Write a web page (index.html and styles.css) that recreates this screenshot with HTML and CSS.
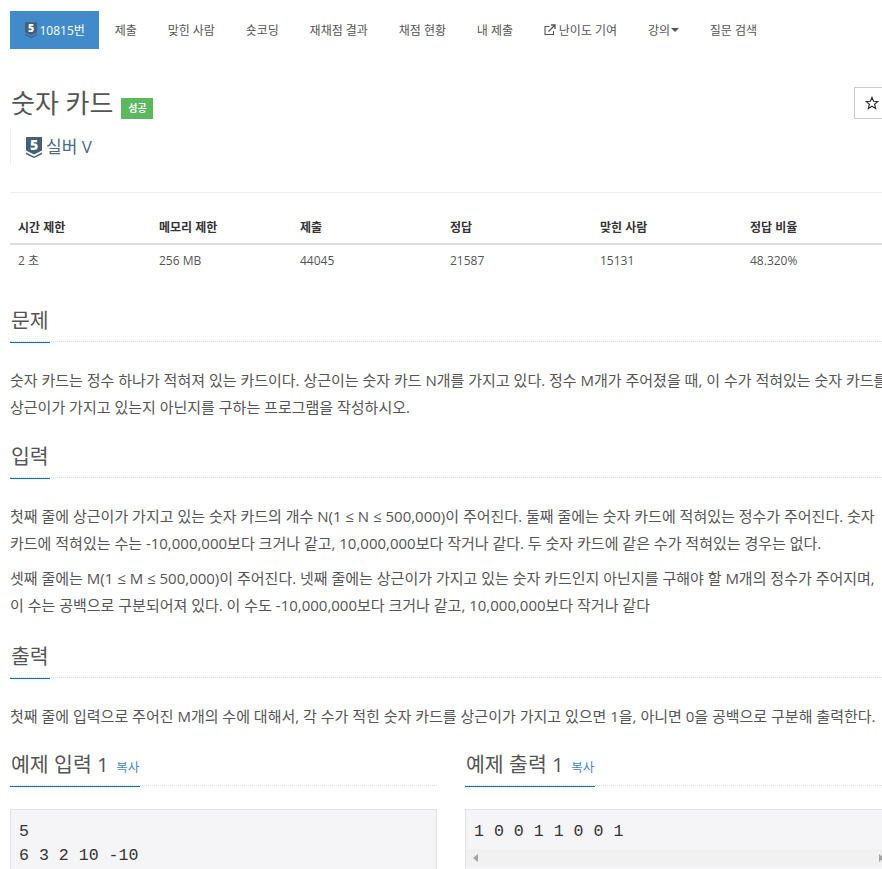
FILE: index.html
```html
<!DOCTYPE html>
<html lang="ko">
<head>
<meta charset="utf-8">
<title>숫자 카드</title>
<link rel="stylesheet" href="styles.css">
</head>
<body>
<svg class="defs" width="0" height="0" aria-hidden="true">
  <symbol id="tier" viewBox="0 0 16 21">
    <path d="M0 0H16V13.5L8 17.5L0 13.5Z" fill="#435f7a"/>
    <path d="M0 15.5L8 19.5L16 15.5V17.2L8 21L0 17.2Z" fill="#435f7a"/>
    <text x="8" y="13" text-anchor="middle" class="tier-num">5</text>
  </symbol>
</svg>
<div class="page">
  <nav class="tabs">
    <a class="tab tab-active"><svg class="tier-small"><use href="#tier"/></svg>10815번</a>
    <a class="tab">제출</a>
    <a class="tab">맞힌 사람</a>
    <a class="tab">숏코딩</a>
    <a class="tab">재채점 결과</a>
    <a class="tab">채점 현황</a>
    <a class="tab">내 제출</a>
    <a class="tab"><svg class="ext" viewBox="0 0 12 12"><path d="M9.5 7V10.5H1V2.5H5.5" fill="none" stroke="#555" stroke-width="1.1"/><path d="M4.5 7.5L10.5 1.5M7 1H11V5" fill="none" stroke="#555" stroke-width="1.3"/></svg>난이도 기여</a>
    <a class="tab">강의<span class="caret"></span></a>
    <a class="tab">질문 검색</a>
  </nav>

  <header class="title-row">
    <h1 class="title">숫자 카드</h1>
    <span class="badge">성공</span>
    <button class="star" aria-label="즐겨찾기"><svg class="star-icon" viewBox="0 0 14 14"><path d="M7 1.4L8.6 5.3L12.8 5.6L9.6 8.3L10.6 12.4L7 10.2L3.4 12.4L4.4 8.3L1.2 5.6L5.4 5.3Z" fill="none" stroke="#333" stroke-width="1.2"/></svg></button>
  </header>
  <div class="tier-line">
    <svg class="tier-big"><use href="#tier"/></svg><span class="tier-name">실버 V</span>
  </div>
  <hr class="rule">

  <table class="info">
    <thead>
      <tr><th class="c1">시간 제한</th><th class="c1">메모리 제한</th><th class="c2">제출</th><th class="c2">정답</th><th class="c2">맞힌 사람</th><th>정답 비율</th></tr>
    </thead>
    <tbody>
      <tr><td>2 초</td><td>256 MB</td><td>44045</td><td>21587</td><td>15131</td><td>48.320%</td></tr>
    </tbody>
  </table>

  <section class="sec sec-first">
    <h2 class="head"><span>문제</span></h2>
    <p>숫자 카드는 정수 하나가 적혀져 있는 카드이다. 상근이는 숫자 카드 N개를 가지고 있다. 정수 M개가 주어졌을 때, 이 수가 적혀있는 숫자 카드를 상근이가 가지고 있는지 아닌지를 구하는 프로그램을 작성하시오.</p>
  </section>
  <section class="sec">
    <h2 class="head"><span>입력</span></h2>
    <p>첫째 줄에 상근이가 가지고 있는 숫자 카드의 개수 N(1 ≤ N ≤ 500,000)이 주어진다. 둘째 줄에는 숫자 카드에 적혀있는 정수가 주어진다. 숫자 카드에 적혀있는 수는 -10,000,000보다 크거나 같고, 10,000,000보다 작거나 같다. 두 숫자 카드에 같은 수가 적혀있는 경우는 없다.</p>
    <p>셋째 줄에는 M(1 ≤ M ≤ 500,000)이 주어진다. 넷째 줄에는 상근이가 가지고 있는 숫자 카드인지 아닌지를 구해야 할 M개의 정수가 주어지며, 이 수는 공백으로 구분되어져 있다. 이 수도 -10,000,000보다 크거나 같고, 10,000,000보다 작거나 같다</p>
  </section>
  <section class="sec sec-out">
    <h2 class="head"><span>출력</span></h2>
    <p>첫째 줄에 입력으로 주어진 M개의 수에 대해서, 각 수가 적힌 숫자 카드를 상근이가 가지고 있으면 1을, 아니면 0을 공백으로 구분해 출력한다.</p>
  </section>

  <div class="samples">
    <section class="sample">
      <h2 class="head"><span>예제 입력 1 <a class="copy">복사</a></span></h2>
      <pre class="code">5
6 3 2 10 -10</pre>
    </section>
    <section class="sample">
      <h2 class="head"><span>예제 출력 1 <a class="copy">복사</a></span></h2>
      <div class="code code-out">
        <pre class="out-text">1 0 0 1 1 0 0 1</pre>
        <div class="hbar"><i class="arr-l"></i><i class="arr-r"></i></div>
      </div>
    </section>
  </div>
</div>
</body>
</html>
```
FILE: styles.css
```css
html, body { margin: 0; padding: 0; height: 869px; overflow: hidden; background: #fff; }
body { font-family: "Open Sans", "Noto Sans CJK KR", sans-serif; color: #555; font-size: 15px; }
.defs { position: absolute; }
.tier-num { font: 800 14px "Open Sans", sans-serif; fill: #fff; }
.page { width: 882px; margin-left: 10px; padding-top: 11px; }

.tabs { display: flex; height: 38px; align-items: stretch; }
.tab { display: flex; align-items: center; padding: 0 15.4px; font-size: 12px; color: #555; white-space: nowrap; }
.tab-active { background: #428bca; color: #fff; padding: 0 14.5px 0 14.5px; }
.tier-small { width: 12px; height: 16px; margin-right: 3px; }
.ext { width: 12px; height: 12px; margin-right: 3px; }
.caret { width: 0; height: 0; margin-left: 1px; border-left: 4px solid transparent; border-right: 4px solid transparent; border-top: 4px solid #555; }

.title-row { display: flex; align-items: flex-end; position: relative; height: 32px; margin-top: 38px; }
.title { margin: 0 0 0 1px; font-size: 26px; font-weight: 400; line-height: 32px; color: #555; }
.badge { background: #5cb85c; color: #fff; font-size: 10px; font-weight: 700; width: 32px; height: 21px; line-height: 21px; text-align: center; margin: 0 0 0 8px; }
.star { position: absolute; left: 844px; top: 0; width: 40px; height: 32px; border: 1px solid #ccc; background: #fff; padding: 0 0 0 10px; display: flex; align-items: center; }
.star-icon { width: 14px; height: 14px; }

.tier-line { display: flex; align-items: center; height: 36px; margin-top: 10px; border-left: 1px solid #eee; padding-left: 15px; font-size: 17px; color: #4a6a87; }
.tier-big { width: 16px; height: 21px; margin-right: 4px; }
.tier-name { margin-top: -3px; }
.rule { border: 0; border-top: 1px solid #eee; margin: 27px 0 0; }

.info { width: 882px; border-collapse: collapse; table-layout: fixed; margin-top: 18px; font-size: 12px; color: #555; }
.info th { text-align: left; padding: 8px 8px 7px; height: 17px; line-height: 17px; font-weight: 700; color: #333; border-bottom: 2px solid #ddd; }
.info td { padding: 7px 8px 8px; height: 17px; line-height: 17px; }
.c1 { width: 125px; }
.c2 { width: 134px; }

.sec { margin-top: 22px; }
.sec-first { margin-top: 30px; }
.sec-out { margin-top: 24px; }
.head { margin: 0 0 25px; height: 34px; border-bottom: 1px dotted #ddd; font-size: 20.5px; font-weight: 400; line-height: 26px; color: #555; }
.head span { display: block; width: fit-content; height: 35px; border-bottom: 1px solid #0076c0; padding: 0 1px; }
.sec p { margin: 0 0 9px; font-size: 15px; line-height: 27px; }
.sec p + p { margin-top: -1px; }

.samples { display: grid; grid-template-columns: 427px 427px; gap: 28px; margin-top: 21px; }
.sample .head { margin-bottom: 23px; }
.copy { font-size: 12.5px; color: #428bca; margin-left: 2px; }
.code { margin: 0; background: #f5f5f7; border: 1px solid #e1e1e8; padding: 10px 8px; font: 16.6px/24px "Liberation Mono", monospace; color: #333; height: 100px; box-sizing: border-box; }
.code-out { padding: 10px 0 0; display: flex; flex-direction: column; }
.out-text { margin: 0 8px 5px; font: inherit; }
.hbar { height: 18px; background: #f1f1f1; position: relative; }
.arr-l, .arr-r { position: absolute; top: 5px; width: 0; height: 0; border-top: 4px solid transparent; border-bottom: 4px solid transparent; }
.arr-l { left: 7px; border-right: 5px solid #a3a3a3; }
.arr-r { right: 7px; border-left: 5px solid #a3a3a3; }
```
